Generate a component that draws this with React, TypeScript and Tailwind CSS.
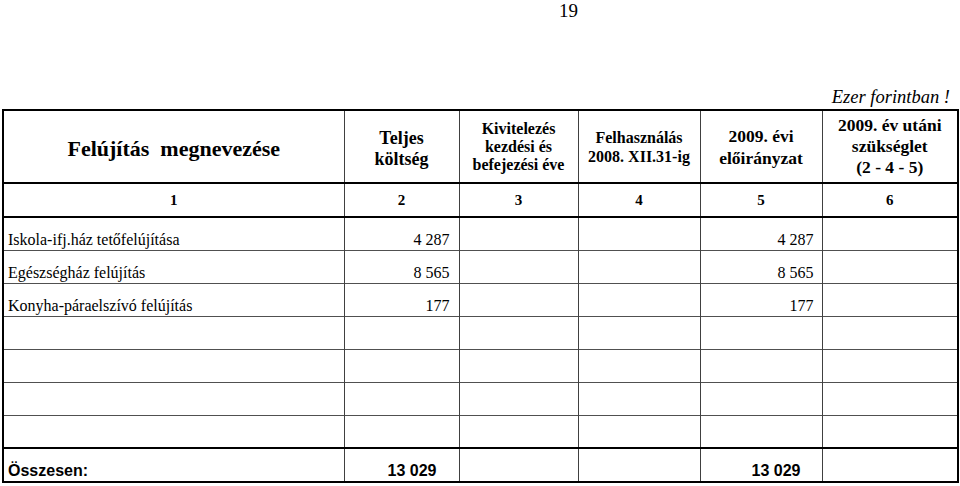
const cols = [341, 115, 119, 122, 122, 136];

const rows = [
  { name: "Iskola-ifj.ház tetőfelújítása", total: "4 287", plan: "4 287" },
  { name: "Egészségház felújítás", total: "8 565", plan: "8 565" },
  { name: "Konyha-páraelszívó felújítás", total: "177", plan: "177" },
  { name: "", total: "", plan: "" },
  { name: "", total: "", plan: "" },
  { name: "", total: "", plan: "" },
  { name: "", total: "", plan: "" },
];

export default function App() {
  return (
    <div className="w-[960px] h-[486px] bg-white text-black overflow-hidden font-['Liberation_Serif',serif]">
      {/* page number */}
      <div className="h-[22px] pl-[559px] text-[19px] leading-[22px]">19</div>

      <div className="h-[87px] flex items-end justify-end pr-[10px] pb-[1px]">
        <span className="italic text-[18.5px] leading-[22px]">Ezer forintban !</span>
      </div>

      <table className="ml-[2px] table-fixed border-collapse border-2 border-black w-[955px]">
        <colgroup>
          {cols.map((w, i) => (
            <col key={i} style={{ width: w }} />
          ))}
        </colgroup>
        <thead>
          <tr className="h-[73px] border-b-2 border-black font-bold text-center">
            <td className="border-r border-[#404040] text-[22px] leading-[26px] pt-[4px] whitespace-pre">
              Felújítás  megnevezése
            </td>
            <td className="border-r border-[#404040] text-[18px] leading-[21px] pt-[4px]">
              Teljes
              <br />
              költség
            </td>
            <td className="border-r border-[#404040] text-[16px] leading-[18px]">
              Kivitelezés
              <br />
              kezdési és
              <br />
              befejezési éve
            </td>
            <td className="border-r border-[#404040] text-[16px] leading-[19px]">
              Felhasználás
              <br />
              2008. XII.31-ig
            </td>
            <td className="border-r border-[#404040] text-[17.5px] leading-[22px]">
              2009. évi
              <br />
              előirányzat
            </td>
            <td className="text-[17.5px] leading-[21px]">
              2009. év utáni
              <br />
              szükséglet
              <br />
              (2 - 4 - 5)
            </td>
          </tr>
          <tr className="h-[34px] border-b-2 border-black font-bold text-center text-[15px]">
            {cols.map((_, i) => (
              <td key={i} className={i < 5 ? "border-r border-[#404040]" : ""}>
                {i + 1}
              </td>
            ))}
          </tr>
        </thead>
        <tbody className="text-[16px] leading-[18px]">
          {rows.map((r, i) => (
            <tr key={i} className="h-[33px] border-b border-[#505050] align-bottom">
              <td className="border-r border-[#404040] pl-[4px] pb-[1px] whitespace-nowrap">{r.name}</td>
              <td className="border-r border-[#404040] text-right pr-[9px] pb-[1px]">{r.total}</td>
              <td className="border-r border-[#404040]"></td>
              <td className="border-r border-[#404040]"></td>
              <td className="border-r border-[#404040] text-right pr-[8px] pb-[1px]">{r.plan}</td>
              <td></td>
            </tr>
          ))}
          <tr className="h-[34px] border-t-2 border-black align-bottom font-bold text-[16px] leading-[19px] font-['Liberation_Sans',sans-serif]">
            <td className="border-r border-[#404040] pl-[4px] pb-[1px]">Összesen:</td>
            <td className="border-r border-[#404040] text-right pr-[22px] pb-[1px]">13 029</td>
            <td className="border-r border-[#404040]"></td>
            <td className="border-r border-[#404040]"></td>
            <td className="border-r border-[#404040] text-right pr-[21px] pb-[1px]">13 029</td>
            <td></td>
          </tr>
        </tbody>
      </table>
    </div>
  );
}
